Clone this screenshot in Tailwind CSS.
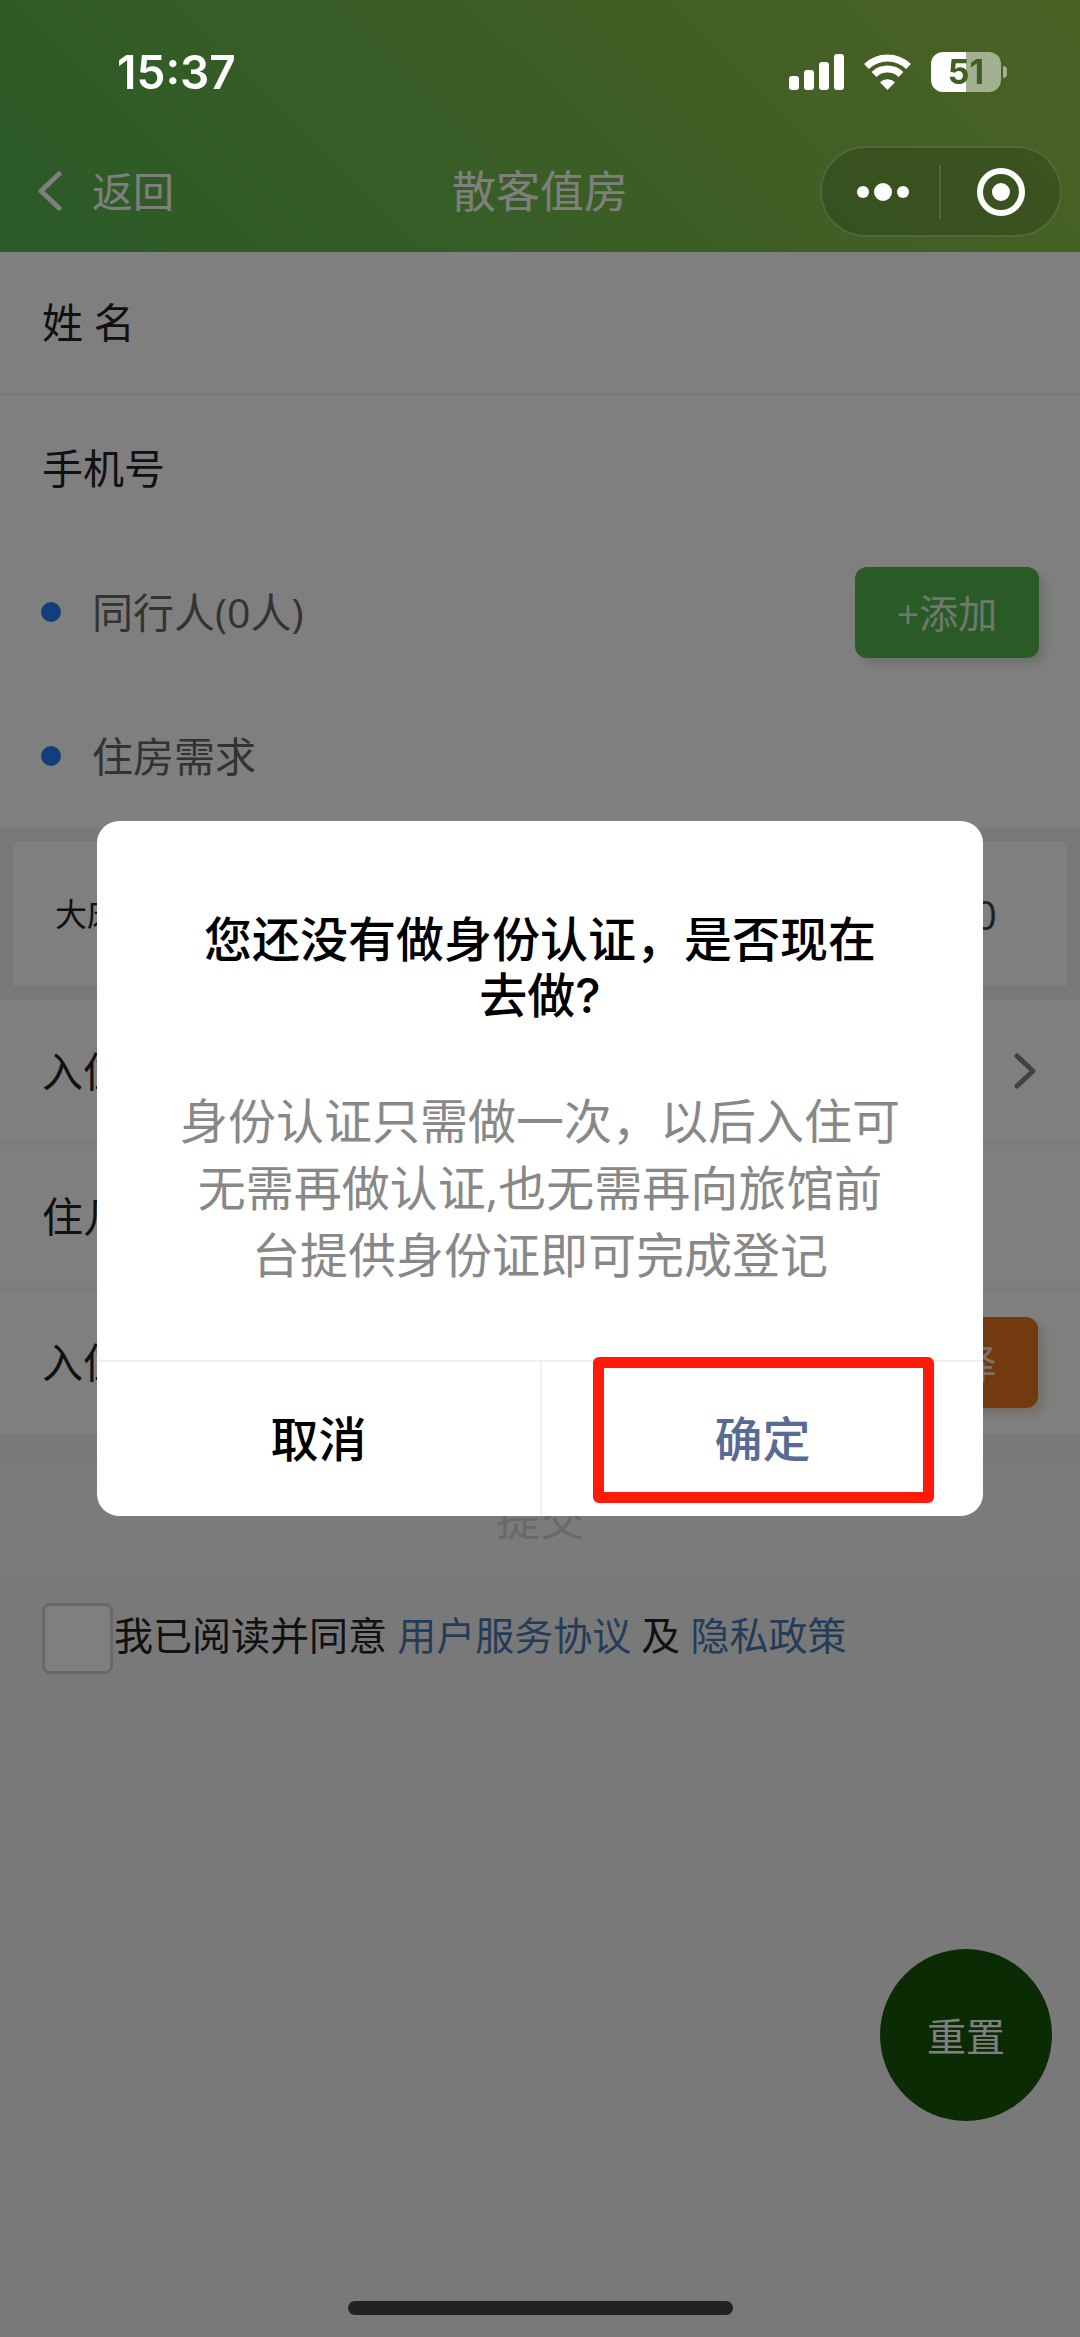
<!DOCTYPE html>
<html lang="zh-CN">
<head>
<meta charset="utf-8">
<meta name="viewport" content="width=device-width, initial-scale=1">
<title>散客值房</title>
<script src="https://cdn.jsdelivr.net/npm/@tailwindcss/browser@4"></script>
</head>
<body class="min-h-screen bg-[#f3f3f3] font-['Open_Sans','Noto_Sans_CJK_SC',sans-serif] text-[41px] leading-none text-[#222]">

  <!-- Page -->
  <header class="bg-linear-45 from-[#52b44e] to-[#96c448] pt-[130px] text-white">
    <div class="relative flex h-[122px] items-center justify-center">
      <a href="#" class="absolute left-9 flex items-center gap-7 text-[41px]">
        <svg class="h-10 w-7" viewBox="0 0 28 40" fill="none" stroke="currentColor" stroke-width="5" stroke-linecap="round" stroke-linejoin="round" aria-hidden="true"><path d="M23 3 5 20l18 17"/></svg>
        返回
      </a>
      <h1 class="text-[44px]">散客值房</h1>
    </div>
  </header>

  <main>
    <form>
      <section class="bg-white">
        <div class="flex h-36 items-center border-b-[3px] border-[#f6f6f6] px-[42px]">
          <label for="name" class="w-[200px]">姓 名</label>
          <input id="name" type="text" class="min-w-0 flex-1 outline-none">
        </div>
        <div class="flex h-36 items-center px-[42px]">
          <label for="phone" class="w-[200px]">手机号</label>
          <input id="phone" type="tel" class="min-w-0 flex-1 outline-none">
        </div>
        <div class="flex h-36 items-center px-[41px] text-[#666]">
          <span class="mr-[31px] size-5 rounded-full bg-[#267cf8]"></span>
          <h2>同行人(0人)</h2>
          <button type="button" class="ml-auto h-[91px] w-[184px] rounded-xl bg-[#54b44c] text-[39px] text-white/80 shadow-[6px_6px_8px_rgba(60,120,60,0.2)]">+添加</button>
        </div>
        <div class="flex h-36 items-center px-[41px] text-[#666]">
          <span class="mr-[31px] size-5 rounded-full bg-[#267cf8]"></span>
          <h2>住房需求</h2>
        </div>
      </section>

      <section class="bg-[#f0f0f0] px-[13px] py-[14px]">
        <div class="flex h-36 items-center justify-between bg-white px-[42px]">
          <label for="rooms" class="text-[32px]">大床房</label>
          <input id="rooms" type="text" inputmode="numeric" value="0" class="mr-[28px] w-24 text-right text-[#444] outline-none">
        </div>
      </section>

      <section class="bg-white">
        <div class="flex h-[145px] items-center justify-between border-b-[3px] border-[#f6f6f6] px-[42px]">
          <span>入住日期</span>
          <svg class="h-10 w-7 text-[#808488]" viewBox="0 0 28 40" fill="none" stroke="currentColor" stroke-width="5" stroke-linecap="round" stroke-linejoin="round" aria-hidden="true"><path d="M7 5l16 15L7 35"/></svg>
        </div>
        <div class="flex h-[145px] items-center border-b-[3px] border-[#f6f6f6] px-[42px]">
          <label for="nights" class="w-[200px]">住几晚</label>
          <input id="nights" type="text" class="w-24 outline-none">
        </div>
        <div class="flex h-[145px] items-center justify-between px-[42px]">
          <span>入住房间</span>
          <button type="button" class="h-[91px] w-[184px] rounded-xl bg-[#e67420] text-[39px] text-white/80 shadow-[6px_6px_8px_rgba(160,90,30,0.2)]">+选择</button>
        </div>
      </section>

      <button type="submit" disabled class="mt-[26px] block h-[116px] w-full bg-[#f7f7f7] text-[44px] text-[#d2d2d2]">提交</button>

      <div class="mt-[26px] flex h-[71px] items-center px-[42px] text-[39px]">
        <input id="agree" type="checkbox" class="size-[71px] appearance-none rounded-lg border-[3px] border-[#d2d2d2] bg-white">
        <p class="ml-px pb-2 whitespace-nowrap"><label for="agree">我已阅读并同意</label> <a href="#" class="text-[#4a78b0]">用户服务协议</a> 及 <a href="#" class="text-[#4a78b0]">隐私政策</a></p>
      </div>
    </form>
  </main>

  <button type="button" class="fixed right-7 bottom-[216px] size-[172px] rounded-full bg-[#145608] text-[39px] text-white">重置</button>

  <!-- Confirmation dialog -->
  <div class="fixed inset-0 flex items-center justify-center bg-black/50">
    <div role="dialog" aria-modal="true" aria-labelledby="dialog-title" class="w-[82%] rounded-[22px] bg-white text-center text-[48px]">
      <h2 id="dialog-title" class="px-[100px] pt-[91px] font-['Inter','Noto_Sans_CJK_SC',sans-serif] leading-14 font-medium text-black">您还没有做身份认证，是否现在去做?</h2>
      <p class="px-[80px] pt-[63px] pb-[72px] leading-[67px] text-[#888]">身份认证只需做一次，以后入住可无需再做认证,也无需再向旅馆前台提供身份证即可完成登记</p>
      <div class="grid h-[156px] grid-cols-2 border-t-2 border-[#f0f0f0] font-medium">
        <button type="button" class="text-black">取消</button>
        <div class="relative grid border-l-2 border-[#f0f0f0]">
          <button type="button" class="text-[#576b95]">确定</button>
          <span class="pointer-events-none absolute -top-[5px] right-[49px] bottom-[13px] left-[51px] rounded-md border-[11px] border-[#ff1a0a]"></span>
        </div>
      </div>
    </div>
  </div>

  <!-- System status bar -->
  <div class="fixed inset-x-0 top-0 flex h-36 items-center justify-between pr-[73px] pl-[117px] text-white">
    <time class="font-['Inter',sans-serif] text-[46px] font-semibold">15:37</time>
    <div class="flex items-center gap-5">
      <svg class="h-9 w-[55px]" viewBox="0 0 55 36" fill="currentColor" aria-label="信号"><rect x="0" y="22" width="10" height="14" rx="3"/><rect x="15" y="16" width="10" height="20" rx="3"/><rect x="30" y="8" width="10" height="28" rx="3"/><rect x="45" y="0" width="10" height="36" rx="3"/></svg>
      <svg class="h-9 w-[47px]" viewBox="0 0 47 36" aria-label="无线网络"><g fill="none" stroke="currentColor" stroke-width="7"><path d="M2.500 12.500a30 30 0 0 1 42 0"/><path d="M10 20.500a19.500 19.500 0 0 1 27 0"/></g><path fill="currentColor" d="M23.500 36 16 28.200a11 11 0 0 1 15 0z"/></svg>
      <div class="flex items-center gap-[2px]">
        <div class="flex h-10 w-[70px] items-center justify-center rounded-xl bg-linear-to-r from-white from-50% to-white/50 to-50% font-['Inter',sans-serif] text-[34px] font-bold text-[#436024]">51</div>
        <span class="h-3 w-1 rounded-r-full bg-white/50"></span>
      </div>
    </div>
  </div>

  <!-- Mini-program capsule -->
  <div class="fixed top-[146px] right-[18px] grid h-[91px] w-[242px] grid-cols-2 items-center rounded-full border-2 border-white/12 bg-black/15 text-white">
    <button type="button" aria-label="更多" class="flex h-[54px] items-center justify-center gap-[5px] border-r-2 border-white/12 pl-1">
      <span class="size-3 rounded-full bg-white"></span><span class="size-[18px] rounded-full bg-white"></span><span class="size-3 rounded-full bg-white"></span>
    </button>
    <button type="button" aria-label="关闭" class="flex items-center justify-center">
      <svg class="size-12" viewBox="0 0 48 48" aria-hidden="true"><circle cx="24" cy="24" r="21" fill="none" stroke="currentColor" stroke-width="6"/><circle cx="24" cy="24" r="9" fill="currentColor"/></svg>
    </button>
  </div>

  <!-- Home indicator -->
  <div class="pointer-events-none fixed inset-x-0 bottom-[22px] flex justify-center"><span class="h-[14px] w-[385px] rounded-full bg-[#222]"></span></div>
</body>
</html>
